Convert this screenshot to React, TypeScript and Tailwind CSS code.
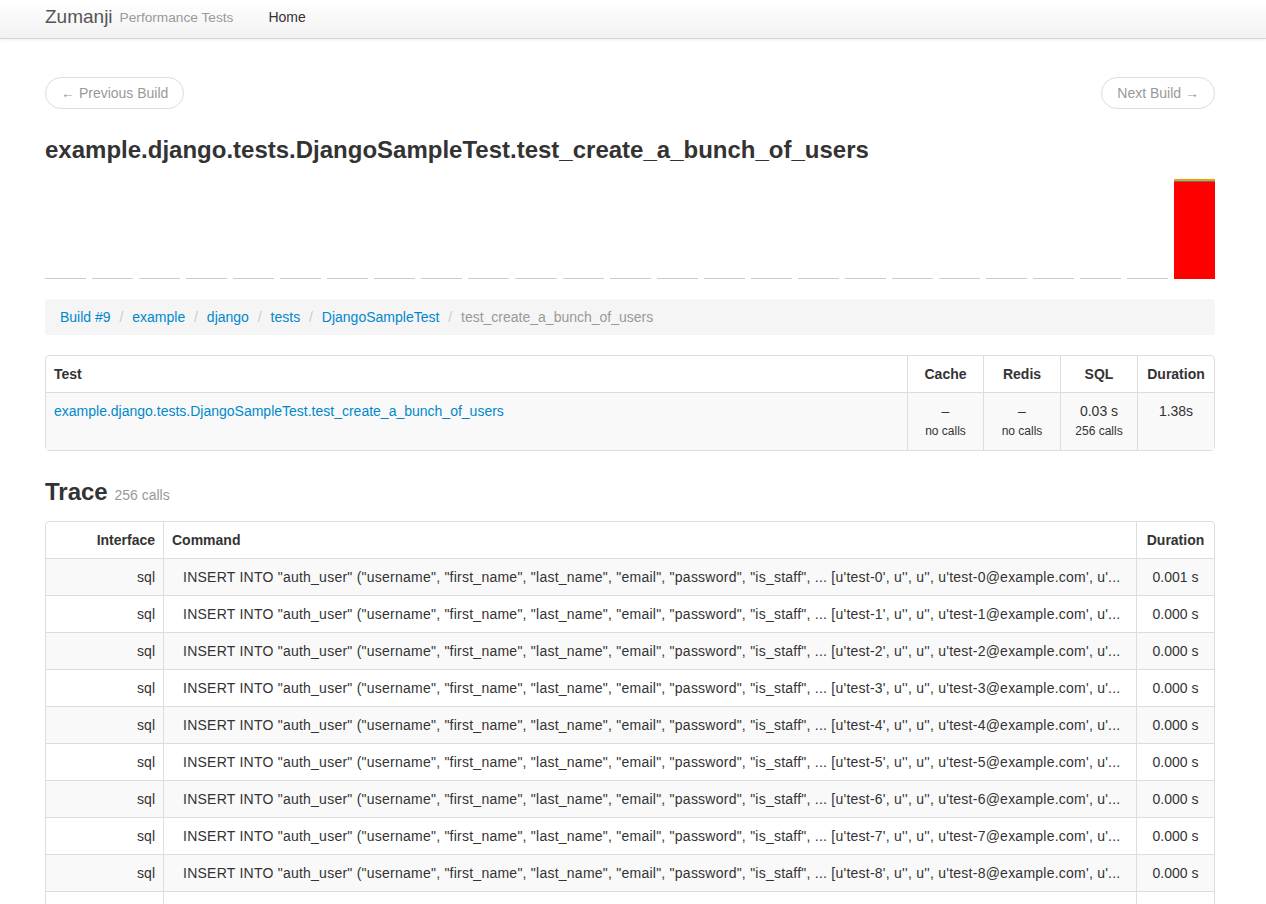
const crumbs = ["Build #9", "example", "django", "tests", "DjangoSampleTest"];

const traceRows = Array.from({ length: 12 }, (_, i) => ({
  iface: "sql",
  command: `INSERT INTO "auth_user" ("username", "first_name", "last_name", "email", "password", "is_staff", ... [u'test-${i}', u'', u'', u'test-${i}@example.com', u'...`,
  duration: i === 0 ? "0.001 s" : "0.000 s",
}));

function Chart() {
  const empty = Array.from({ length: 24 });
  return (
    <div className="flex items-end gap-[6px] h-[100px] mt-[14px]">
      {empty.map((_, i) => (
        <div key={i} className="flex-1 border-b border-[#ccc]" />
      ))}
      <div className="flex-1 h-[100px] flex flex-col">
        <div className="h-[2px] bg-[#ff9900]" />
        <div className="h-px bg-[#3d7fa8]" />
        <div className="flex-1 bg-[#ff0000]" />
      </div>
    </div>
  );
}

export default function App() {
  return (
    <div className="min-h-screen bg-white text-[14px] leading-[20px] text-[#333] font-['Liberation_Sans',Arial,sans-serif]">
      {/* navbar */}
      <div className="h-[39px] bg-gradient-to-b from-white to-[#f2f2f2] border-b border-[#d4d4d4] shadow-[0_1px_4px_rgba(0,0,0,0.065)]">
        <div className="ml-[45px] w-[1170px] h-full flex items-center pb-[4px]">
          <span className="text-[19px] text-[#555]">Zumanji</span>
          <span className="ml-[7px] text-[13.7px] text-[#999] mt-[2px]">Performance Tests</span>
          <span className="ml-[35px] text-[#333]">Home</span>
        </div>
      </div>

      <div className="ml-[45px] w-[1170px]">
        <div className="flex justify-between mt-[38px]">
          <button className="h-[32px] px-[15px] rounded-full border border-[#ddd] text-[#999]">
            &larr; Previous Build
          </button>
          <button className="h-[32px] px-[15px] rounded-full border border-[#ddd] text-[#999]">
            Next Build &rarr;
          </button>
        </div>

        <h1 className="mt-[26px] text-[24px] leading-[30px] font-bold text-[#333]">
          example.django.tests.DjangoSampleTest.test_create_a_bunch_of_users
        </h1>

        <Chart />

        {/* breadcrumb */}
        <div className="mt-[20px] bg-[#f5f5f5] rounded-[4px] px-[15px] py-[8px]">
          {crumbs.map((c) => (
            <span key={c}>
              <span className="text-[#0088cc]">{c}</span>{" "}
              <span className="px-[5px] text-[#ccc]">/&nbsp;</span>
            </span>
          ))}
          <span className="text-[#999]">test_create_a_bunch_of_users</span>
        </div>

        {/* test summary table */}
        <table className="mt-[20px] w-full border-separate border-spacing-0 border border-[#ddd] rounded-[4px]">
          <thead>
            <tr className="font-bold">
              <th className="text-left p-[8px] font-bold">Test</th>
              <th className="w-[76px] p-[8px] border-l border-[#ddd] font-bold">Cache</th>
              <th className="w-[77px] p-[8px] border-l border-[#ddd] font-bold">Redis</th>
              <th className="w-[77px] p-[8px] border-l border-[#ddd] font-bold">SQL</th>
              <th className="w-[77px] p-[8px] border-l border-[#ddd] font-bold">Duration</th>
            </tr>
          </thead>
          <tbody>
            <tr className="bg-[#f9f9f9] align-top">
              <td className="p-[8px] border-t border-[#ddd] text-[#0088cc]">
                example.django.tests.DjangoSampleTest.test_create_a_bunch_of_users
              </td>
              <td className="p-[8px] border-t border-l border-[#ddd] text-center">
                <div>–</div>
                <div className="text-[12px] leading-[21px]">no calls</div>
              </td>
              <td className="p-[8px] border-t border-l border-[#ddd] text-center">
                <div>–</div>
                <div className="text-[12px] leading-[21px]">no calls</div>
              </td>
              <td className="p-[8px] border-t border-l border-[#ddd] text-center">
                <div>0.03 s</div>
                <div className="text-[12px] leading-[21px]">256 calls</div>
              </td>
              <td className="p-[8px] border-t border-l border-[#ddd] text-center">
                <div>1.38s</div>
              </td>
            </tr>
          </tbody>
        </table>

        <h2 className="mt-[26px] mb-[14px] text-[24px] leading-[30px] font-bold">
          Trace <span className="text-[14px] leading-[20px] font-normal text-[#999]">256 calls</span>
        </h2>

        <table className="w-full border-separate border-spacing-0 border border-[#ddd] rounded-[4px] table-fixed">
          <thead>
            <tr>
              <th className="w-[117px] p-[8px] text-right font-bold">Interface</th>
              <th className="p-[8px] text-left border-l border-[#ddd] font-bold">Command</th>
              <th className="w-[78px] p-[8px] border-l border-[#ddd] font-bold">Duration</th>
            </tr>
          </thead>
          <tbody>
            {traceRows.map((r, i) => (
              <tr key={i} className={i % 2 === 0 ? "bg-[#f9f9f9]" : "bg-white"}>
                <td className="p-[8px] text-right border-t border-[#ddd]">{r.iface}</td>
                <td className="py-[8px] pl-[19px] pr-[8px] border-t border-l border-[#ddd] whitespace-nowrap overflow-hidden tracking-[0.24px]">
                  {r.command}
                </td>
                <td className="p-[8px] text-center border-t border-l border-[#ddd]">{r.duration}</td>
              </tr>
            ))}
          </tbody>
        </table>
      </div>
    </div>
  );
}
